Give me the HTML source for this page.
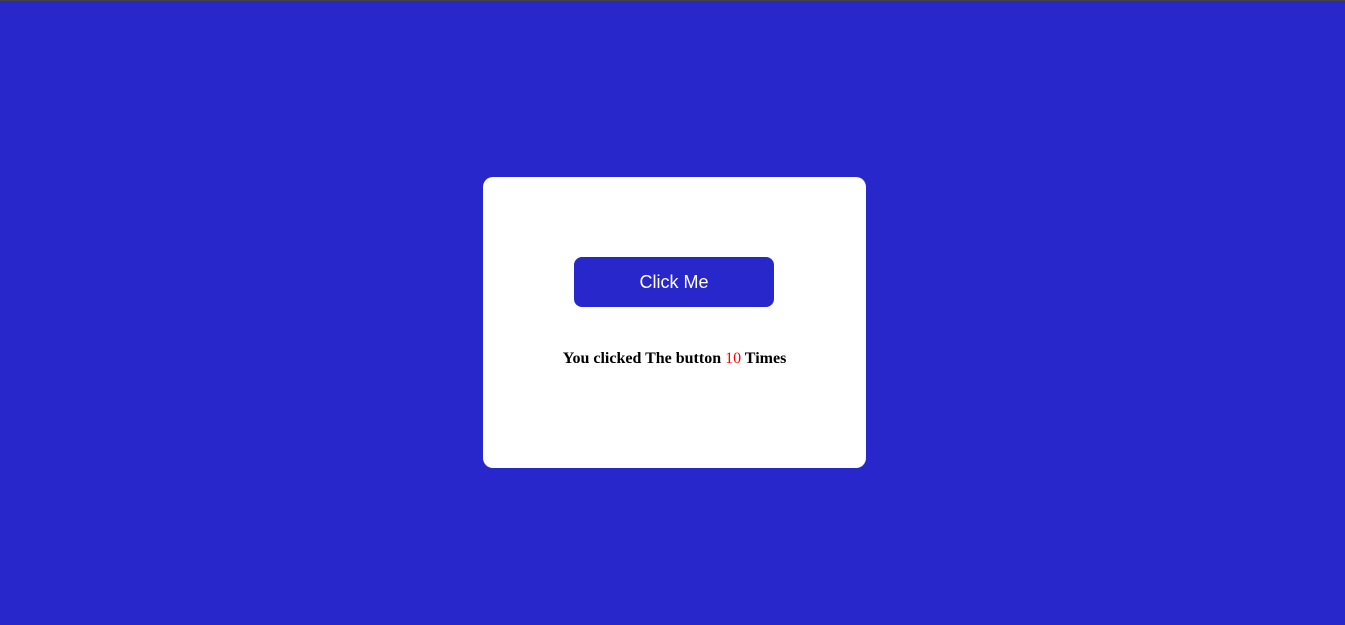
<!DOCTYPE html>
<html><head><style>
html,body{margin:0;padding:0}
body{width:1345px;height:625px;background:#2827cb;position:relative;overflow:hidden;border-top:1px solid #444;box-sizing:border-box}
.card{position:absolute;left:483px;top:176px;width:383px;height:291px;background:#fff;border-radius:10px}
.btn{position:absolute;left:91px;top:80px;width:200px;height:50px;background:#2827cb;border-radius:8px;color:#fff;font:18px "Liberation Sans",sans-serif;text-align:center;line-height:50px}
.txt{position:absolute;left:0;width:383px;top:173px;text-align:center;font:bold 16px "Liberation Serif",serif;color:#000}
.txt span{color:red;font-weight:normal}
</style></head><body>
<div class="card"><div class="btn">Click Me</div><div class="txt">You clicked The button <span>10</span> Times</div></div>
</body></html>
